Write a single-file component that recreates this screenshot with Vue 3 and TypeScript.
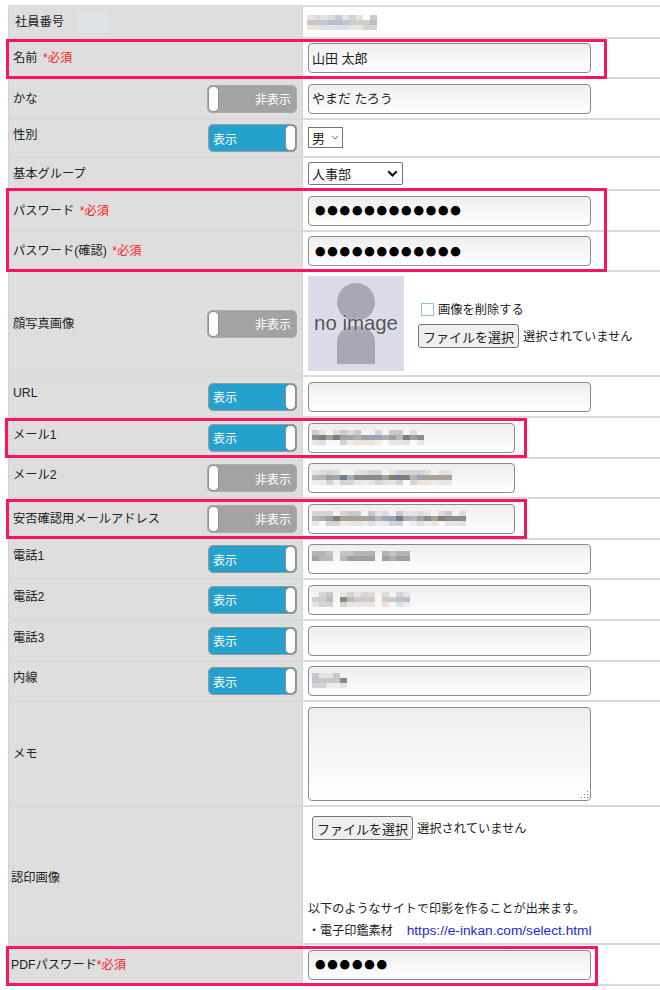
<script setup lang="ts">
type Mosaic = { cols: number; seed: number; gaps?: number[]; tone?: 'dark' | 'light' | 'block' }
type Row = {
  label: string
  req?: string
  h: number
  toggle?: 'on' | 'off'
  up?: boolean
  kind: 'input' | 'short' | 'static' | 'sex' | 'group' | 'photo' | 'memo' | 'stamp' | 'dots'
  value?: string
  mosaic?: Mosaic
  cls?: string
}

const rows: Row[] = [
  { label: '社員番号', h: 32, kind: 'static', cls: 'first', mosaic: { cols: 10, seed: 3, tone: 'light' } },
  { label: '名前', req: ' *必須', h: 40, kind: 'input', value: '山田 太郎' },
  { label: 'かな', h: 41, kind: 'input', value: 'やまだ たろう', toggle: 'off' },
  { label: '性別', h: 38, kind: 'sex', toggle: 'on', up: true },
  { label: '基本グループ', h: 33, kind: 'group' },
  { label: 'パスワード', req: ' *必須', h: 41, kind: 'dots', value: '●●●●●●●●●●●●' },
  { label: 'パスワード(確認)', req: ' *必須', h: 40, kind: 'dots', value: '●●●●●●●●●●●●' },
  { label: '顔写真画像', h: 105, kind: 'photo', toggle: 'off' },
  { label: 'URL', h: 41, kind: 'input', toggle: 'on', up: true },
  { label: 'メール1', h: 41, kind: 'short', toggle: 'on', up: true, mosaic: { cols: 16, seed: 11 } },
  { label: 'メール2', h: 40, kind: 'short', toggle: 'off', up: true, mosaic: { cols: 20, seed: 17 } },
  { label: '安否確認用メールアドレス', h: 41, kind: 'short', toggle: 'off', mosaic: { cols: 22, seed: 29 } },
  { label: '電話1', h: 40, kind: 'input', toggle: 'on', up: true, mosaic: { cols: 14, seed: 5, gaps: [3, 9], tone: 'block' } },
  { label: '電話2', h: 41, kind: 'input', toggle: 'on', up: true, mosaic: { cols: 14, seed: 37, gaps: [3, 9], tone: 'light' } },
  { label: '電話3', h: 41, kind: 'input', toggle: 'on', up: true },
  { label: '内線', h: 40, kind: 'input', toggle: 'on', up: true, mosaic: { cols: 5, seed: 41, tone: 'light' } },
  { label: 'メモ', h: 105, kind: 'memo' },
  { label: '認印画像', h: 138, kind: 'stamp', cls: 'tight low' },
  { label: 'PDFパスワード', req: '*必須', h: 41, kind: 'dots', value: '●●●●●●', cls: 'tight flush' }
]

const mids = ['#8b8b8b', '#aeaeae', '#9aa5b8', '#857c72', '#b6b6b6', '#6f7c98', '#a9a296', '#a0a0a0']
const mids2 = ['#c8c8c8', '#c2c2c2', '#b8bfca', '#8d8880', '#cfcfcf', '#c0c6d2', '#d0ccc4', '#bdbdbd']
const tops = ['#d4d4d4', '#c6c9cf', '#e4e4e4', '#dcdcdc', 'transparent']
const bots = ['#e6e6e6', '#d7e2ee', '#eee3d8', 'transparent', '#ececec', '#d4d4d4']
const blockTop = ['#b4b4b4', '#a8a8a8', '#bcbcbc', '#c4c4c4']
const blockMid = ['#a0a0a0', '#b0b0b0', '#989898', '#bababa']

function cells(m: Mosaic) {
  let s = m.seed * 7919 + 13
  const next = (n: number) => {
    s = (s * 1103515245 + 12345) & 0x7fffffff
    return (s >> 8) % n
  }
  const out: { x: number; y: number; c: string }[] = []
  const block = m.tone === 'block'
  const mid = block ? blockMid : m.tone === 'light' ? mids2 : mids
  const top = block ? blockTop : tops
  for (let i = 0; i < m.cols; i++) {
    if (m.gaps?.includes(i)) continue
    out.push({ x: i * 7, y: 0, c: top[next(top.length)] })
    out.push({ x: i * 7, y: 5, c: mid[next(mid.length)] })
    if (!block) out.push({ x: i * 7, y: 10, c: bots[next(bots.length)] })
  }
  return out
}
</script>

<template>
  <main class="sheet">
    <section v-for="row in rows" :key="row.label" class="row" :class="row.cls" :style="{ height: row.h + 'px' }">
      <div class="head">
        <span class="label" :class="{ up: row.up }">{{ row.label }}<em v-if="row.req" class="req">{{ row.req }}</em></span>
        <span v-if="row.kind === 'static'" class="badge"></span>
        <span v-if="row.toggle" class="toggle" :class="row.toggle">
          <i class="knob"></i>
          <b>{{ row.toggle === 'on' ? '表示' : '非表示' }}</b>
        </span>
      </div>

      <div class="body">
        <svg v-if="row.kind === 'static' && row.mosaic" class="mosaic flat" :width="row.mosaic.cols * 7" height="15">
          <rect v-for="(c, i) in cells(row.mosaic)" :key="i" :x="c.x" :y="c.y" width="7" height="5" :fill="c.c" />
        </svg>

        <div v-if="row.kind === 'input' || row.kind === 'dots' || row.kind === 'short'" class="field" :class="{ short: row.kind === 'short' }">
          <input class="box" :class="{ dots: row.kind === 'dots' }" type="text" :value="row.value ?? ''" />
          <svg v-if="row.mosaic" class="mosaic" :width="row.mosaic.cols * 7" height="15">
            <rect v-for="(c, i) in cells(row.mosaic)" :key="i" :x="c.x" :y="c.y" width="7" height="5" :fill="c.c" />
          </svg>
        </div>

        <span v-if="row.kind === 'sex'" class="pick sex">
          <span>男</span>
          <svg width="8" height="5" viewBox="0 0 8 5"><path d="M.7.7L4 4 7.3.7" fill="none" stroke="#777" stroke-width="1" /></svg>
        </span>

        <span v-if="row.kind === 'group'" class="pick group">
          <span>人事部</span>
          <svg width="11" height="7" viewBox="0 0 11 7"><path d="M1.2 1.2l4.3 4.3 4.3-4.3" fill="none" stroke="#111" stroke-width="2" /></svg>
        </span>

        <div v-if="row.kind === 'photo'" class="photo">
          <div class="noimage">
            <i class="sil-head"></i>
            <i class="sil-body"></i>
            <span class="noimage-text">no image</span>
          </div>
          <div class="photo-side">
            <label class="del"><i class="check"></i>画像を削除する</label>
            <div class="file"><button class="file-btn" type="button">ファイルを選択</button><span>選択されていません</span></div>
          </div>
        </div>

        <div v-if="row.kind === 'memo'" class="memo">
          <svg class="grip" width="9" height="9" viewBox="0 0 9 9">
            <g fill="#777"><rect x="7" y="1" width="1" height="1" /><rect x="7" y="4" width="1" height="1" /><rect x="4" y="4" width="1" height="1" /><rect x="7" y="7" width="1" height="1" /><rect x="4" y="7" width="1" height="1" /><rect x="1" y="7" width="1" height="1" /></g>
          </svg>
        </div>

        <div v-if="row.kind === 'stamp'" class="stamp">
          <div class="file inset"><button class="file-btn" type="button">ファイルを選択</button><span>選択されていません</span></div>
          <p class="note">以下のようなサイトで印影を作ることが出来ます。</p>
          <p class="note site">・電子印鑑素材<a class="link">https://e-inkan.com/select.html</a></p>
        </div>
      </div>
    </section>

    <i class="mark m-name"></i>
    <i class="mark m-pass"></i>
    <i class="mark m-mail"></i>
    <i class="mark m-safe"></i>
    <i class="mark m-pdf"></i>
  </main>
</template>

<style scoped>
.sheet {
  position: relative;
  width: 660px;
  height: 990px;
  box-sizing: border-box;
  padding: 7px 0 0 8px;
  background: #fff;
  font-family: "Liberation Sans", "Noto Sans CJK JP", sans-serif;
  font-size: 12.25px;
  color: #222;
}
.sheet::before {
  content: "";
  position: absolute;
  left: 8px;
  right: 0;
  top: 5px;
  height: 2px;
  background: #dcdcdc;
}
.row {
  display: grid;
  grid-template-columns: 294px 1fr;
  box-sizing: border-box;
  border-bottom: 2px solid #d9d9d9;
}
.head {
  display: flex;
  align-items: center;
  padding-left: 5px;
  background: #dedede;
  box-shadow: inset 1px 0 0 #d2d2d2;
  position: relative;
}
.first .head { padding-left: 7px; }
.tight .head { padding-left: 3px; }
.label {
  white-space: nowrap;
  padding-bottom: 2px;
}
.label.up { padding-bottom: 8px; }
.low .label { padding: 4px 0 0; }
.req {
  font-style: normal;
  color: #fb1c2c;
  white-space: pre;
  margin-left: 2px;
}
.flush .req { margin-left: 0; }
.badge {
  width: 31px;
  height: 21px;
  margin-left: 14px;
  background: #dde2e6;
}
.toggle {
  position: absolute;
  top: 50%;
  margin-top: -14px;
  height: 28px;
  box-sizing: border-box;
  display: flex;
  align-items: center;
  border-radius: 5px;
  color: #fff;
}
.toggle b { font-weight: 400; font-size: 12px; }
.toggle.off {
  background: #a3a3a3;
  border: 1px solid #acacac;
  right: 5px;
  width: 90px;
  justify-content: flex-end;
  padding-right: 5px;
}
.toggle.on {
  background: #25a1cd;
  border: 1px solid #9a9a9a;
  right: 5px;
  width: 89px;
  justify-content: flex-start;
  padding-left: 4px;
}
.knob {
  position: absolute;
  top: 0;
  bottom: 0;
  width: 9px;
  background: #fff;
  border-radius: 5px;
  border: 1px solid #8f8f8f;
}
.off .knob { left: 0; }
.on .knob { right: 0; }
.body {
  display: flex;
  align-items: center;
  padding-left: 5px;
  border-left: 1px solid #d2d2d2;
  min-width: 0;
}
.field {
  position: relative;
  width: 283px;
  height: 30px;
}
.field.short { width: 207px; }
.box {
  display: block;
  width: 100%;
  height: 100%;
  box-sizing: border-box;
  border: 1.5px solid #8a8a8a;
  border-radius: 4px;
  padding: 0 3px 2px;
  background: linear-gradient(#eeeeee, #ffffff);
  font: inherit;
  font-size: 13px;
  color: #222;
  outline: none;
}
.box.dots {
  padding: 0 0 0 6px;
  font-family: "Noto Sans CJK JP", sans-serif;
  font-size: 10.5px;
  letter-spacing: 1.8px;
  color: #000;
}
.mosaic {
  position: absolute;
  left: 4px;
  top: 7px;
  filter: blur(0.6px);
}
.mosaic.flat {
  position: static;
  margin-left: -1px;
}
.pick {
  display: flex;
  align-items: center;
  justify-content: space-between;
  box-sizing: border-box;
  background: #fff;
  border: 1px solid #767676;
  font-size: 13px;
}
.sex {
  width: 35px;
  height: 21px;
  padding: 0 3px 0 3px;
  margin-bottom: 2px;
}
.group {
  width: 95px;
  height: 23px;
  padding: 0 4px 0 3px;
  border-radius: 2px;
}
.photo {
  display: flex;
  align-items: center;
}
.noimage {
  position: relative;
  width: 96px;
  height: 95px;
  background: #dddbe9;
  overflow: hidden;
}
.sil-head {
  position: absolute;
  left: 29px;
  top: 7px;
  width: 38px;
  height: 38px;
  border-radius: 50%;
  background: #a8a7b5;
}
.sil-body {
  position: absolute;
  left: 29px;
  top: 50px;
  width: 38px;
  height: 38px;
  border-radius: 16px 16px 0 0;
  background: #a8a7b5;
}
.noimage-text {
  position: absolute;
  left: 0;
  right: 0;
  top: 35px;
  text-align: center;
  font-size: 20.4px;
  line-height: 24px;
  color: #555;
  text-shadow: 0 0 2px #eee;
}
.photo-side {
  display: flex;
  flex-direction: column;
  gap: 6px;
  margin-left: 14px;
  padding-top: 1px;
}
.del {
  display: flex;
  align-items: center;
  gap: 4px;
  margin-left: 3px;
}
.check {
  width: 13px;
  height: 13px;
  box-sizing: border-box;
  border: 1px solid #8fc3dc;
  background: #fff;
}
.file {
  display: flex;
  align-items: center;
  gap: 4px;
}
.file.inset { margin-left: 4px; margin-top: 9px; }
.file-btn {
  width: 101px;
  height: 24px;
  padding: 0;
  box-sizing: border-box;
  border: 1px solid #767676;
  border-radius: 3px;
  background: #efefef;
  font: inherit;
  font-size: 13px;
  color: #222;
}
.memo {
  position: relative;
  width: 283px;
  height: 94px;
  margin-top: 1px;
  box-sizing: border-box;
  border: 1.5px solid #8a8a8a;
  border-radius: 4px;
  background: linear-gradient(#eeeeee, #ffffff);
}
.grip {
  position: absolute;
  right: 1px;
  bottom: 1px;
}
.stamp {
  align-self: stretch;
  display: flex;
  flex-direction: column;
  flex: 1;
}
.note {
  margin: 0;
  font-size: 12.1px;
  line-height: 21px;
}
.stamp .note:nth-of-type(1) { margin-top: auto; }
.site { margin-bottom: 1px; }
.link {
  margin-left: 14px;
  color: #2a1fe0;
  font-size: 13.7px;
}
.mark {
  position: absolute;
  box-sizing: border-box;
  border: 3px solid #fb1560;
  pointer-events: none;
}
.m-name { left: 6px; top: 39px; width: 601px; height: 40px; }
.m-pass { left: 6px; top: 188px; width: 601px; height: 84px; }
.m-mail { left: 5px; top: 418px; width: 522px; height: 40px; }
.m-safe { left: 6px; top: 499px; width: 521px; height: 40px; }
.m-pdf { left: 6px; top: 946px; width: 592px; height: 40px; }
</style>

<style>
html, body { margin: 0; background: #fff; }
</style>
